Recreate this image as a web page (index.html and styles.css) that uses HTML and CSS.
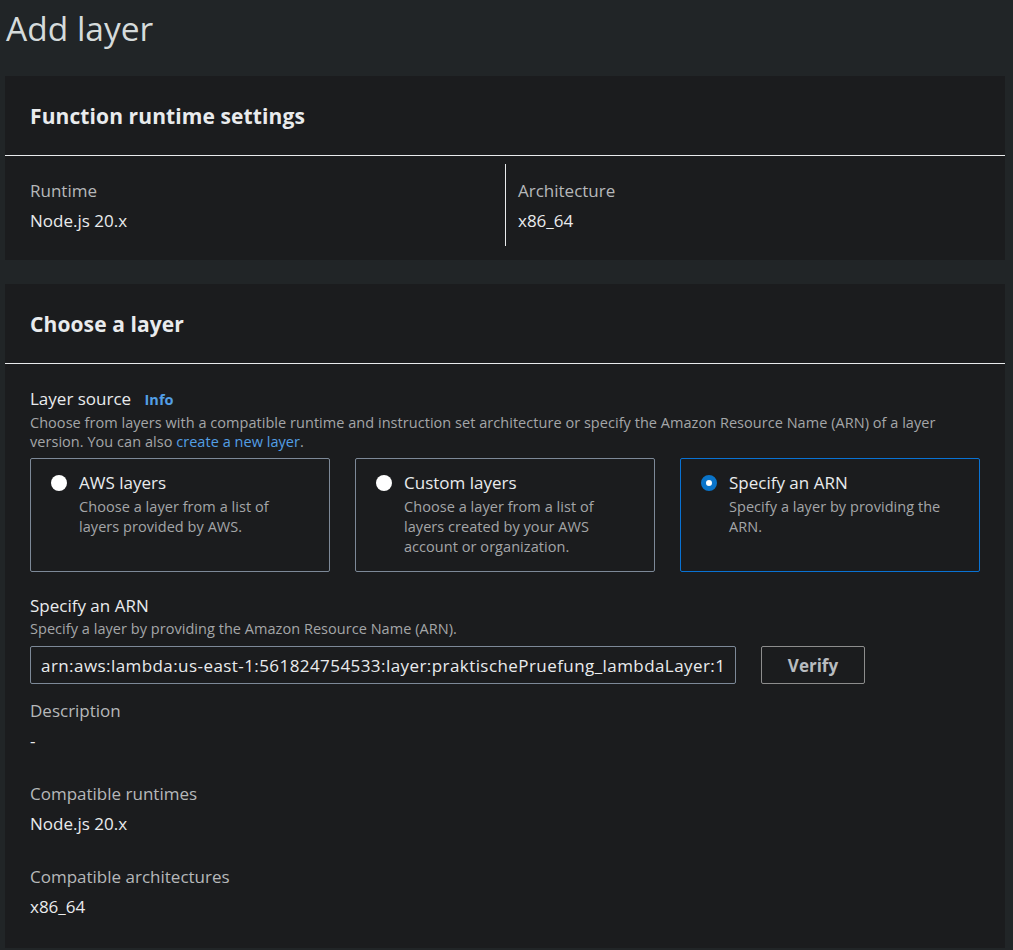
FILE: index.html
```html
<!DOCTYPE html>
<html lang="en">
<head>
<meta charset="utf-8">
<title>Add layer</title>
<link rel="stylesheet" href="styles.css">
</head>
<body>
<h1 class="page-title">Add layer</h1>

<section class="panel">
  <div class="panel-header"><h2>Function runtime settings</h2></div>
  <div class="panel-body cols">
    <div class="col">
      <div class="kv-label">Runtime</div>
      <div class="kv-value">Node.js 20.x</div>
    </div>
    <div class="col col-div">
      <div class="kv-label">Architecture</div>
      <div class="kv-value">x86_64</div>
    </div>
  </div>
</section>

<section class="panel panel-2">
  <div class="panel-header"><h2>Choose a layer</h2></div>
  <div class="panel-body body-2">
    <div class="field-label">Layer source <a class="info">Info</a></div>
    <p class="field-desc">Choose from layers with a compatible runtime and instruction set architecture or specify the Amazon Resource Name (ARN) of a layer version. You can also <a class="link">create a new layer</a>.</p>

    <div class="tiles">
      <div class="tile">
        <span class="radio"></span>
        <div class="tile-text">
          <div class="tile-title">AWS layers</div>
          <div class="tile-desc">Choose a layer from a list of layers provided by AWS.</div>
        </div>
      </div>
      <div class="tile">
        <span class="radio"></span>
        <div class="tile-text">
          <div class="tile-title">Custom layers</div>
          <div class="tile-desc">Choose a layer from a list of layers created by your AWS account or organization.</div>
        </div>
      </div>
      <div class="tile tile-on">
        <span class="radio radio-on"></span>
        <div class="tile-text">
          <div class="tile-title">Specify an ARN</div>
          <div class="tile-desc">Specify a layer by providing the ARN.</div>
        </div>
      </div>
    </div>

    <div class="field-label arn-label">Specify an ARN</div>
    <p class="field-desc">Specify a layer by providing the Amazon Resource Name (ARN).</p>
    <div class="arn-row">
      <div class="input">arn:aws:lambda:us-east-1:561824754533:layer:praktischePruefung_lambdaLayer:1</div>
      <div class="btn">Verify</div>
    </div>

    <div class="info-block">
      <div class="kv-label">Description</div>
      <div class="kv-value">-</div>
    </div>
    <div class="info-block">
      <div class="kv-label">Compatible runtimes</div>
      <div class="kv-value">Node.js 20.x</div>
    </div>
    <div class="info-block">
      <div class="kv-label">Compatible architectures</div>
      <div class="kv-value">x86_64</div>
    </div>
  </div>
</section>
</body>
</html>
```

FILE: styles.css
```css
html, body {
  margin: 0;
  padding: 0;
}
body {
  background: #212527;
  font-family: "Open Sans", "Noto Sans", sans-serif;
  color: #e9ebed;
  padding: 0 8px 0 5px;
  overflow: hidden;
  height: 950px;
}
.page-title {
  margin: 0;
  padding: 6px 0 0 1px;
  height: 76px;
  box-sizing: border-box;
  font-size: 33.5px;
  font-weight: 400;
  line-height: 44px;
  color: #d5dbdb;
}
.panel {
  background: #1b1c1e;
}
.panel-2 {
  margin-top: 24px;
}
.panel-header {
  height: 80px;
  box-sizing: border-box;
  border-bottom: 1px solid #e9ebed;
  padding: 0 25px;
  display: flex;
  align-items: center;
}
.panel-header h2 {
  margin: 0;
  font-size: 21px;
  font-weight: 700;
  color: #e9ebed;
  letter-spacing: 0.1px;
}
.cols {
  display: grid;
  grid-template-columns: 1fr 1fr;
  padding: 8px 25px 14px;
}
.col {
  padding: 16px 0 14px;
}
.col-div {
  border-left: 1px solid #e9ebed;
  padding-left: 12px;
}
.kv-label {
  font-size: 17px;
  line-height: 22px;
  color: #b6b8ba;
}
.kv-value {
  font-size: 17px;
  line-height: 22px;
  margin-top: 8px;
  color: #e9ebed;
}
.body-2 {
  padding: 24px 25px 30px;
}
.field-label {
  font-size: 17px;
  line-height: 22px;
  color: #e9ebed;
}
.info {
  color: #539fe5;
  font-size: 14.5px;
  font-weight: 700;
  margin-left: 9px;
}
.link {
  color: #539fe5;
}
.field-desc {
  margin: 2px 0 0;
  font-size: 14.5px;
  line-height: 19px;
  color: #a4a6a8;
  letter-spacing: 0.04px;
}
.tiles {
  display: grid;
  grid-template-columns: repeat(3, 1fr);
  gap: 25px;
  margin-top: 7px;
}
.tile {
  height: 114px;
  box-sizing: border-box;
  border: 1px solid #7d8998;
  border-radius: 2px;
  padding: 12px 20px;
  display: flex;
  gap: 12px;
  align-items: flex-start;
}
.tile-on {
  border-color: #0972d3;
}
.radio {
  flex: none;
  width: 16px;
  height: 16px;
  margin-top: 4px;
  border-radius: 50%;
  background: #ffffff;
  box-sizing: border-box;
}
.radio-on {
  background: #ffffff;
  border: 5px solid #0a74c9;
}
.tile-title {
  font-size: 17px;
  line-height: 24px;
  color: #e9ebed;
}
.tile-desc {
  margin-top: 2px;
  font-size: 14.5px;
  line-height: 20px;
  color: #a4a6a8;
  letter-spacing: 0.05px;
}
.arn-label {
  margin-top: 23px;
}
.arn-row {
  display: flex;
  gap: 25px;
  margin-top: 8px;
}
.input {
  width: 706px;
  height: 38px;
  box-sizing: border-box;
  border: 1px solid #7d8998;
  border-radius: 2px;
  padding: 0 10px;
  display: flex;
  align-items: center;
  font-size: 17px;
  color: #e9ebed;
  letter-spacing: 0.43px;
  white-space: nowrap;
  overflow: hidden;
}
.btn {
  width: 104px;
  height: 38px;
  box-sizing: border-box;
  border: 1px solid #8d8d8d;
  border-radius: 2px;
  display: flex;
  align-items: center;
  justify-content: center;
  font-size: 17px;
  font-weight: 700;
  color: #b8bcc0;
}
.info-block {
  margin-top: 16px;
}
.info-block + .info-block {
  margin-top: 31px;
}
```
